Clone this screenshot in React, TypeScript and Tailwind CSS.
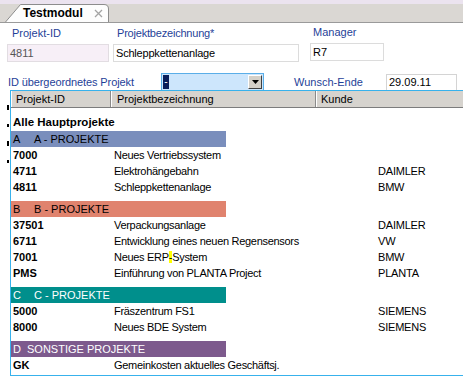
import React from 'react';

type Row = { id: string; name: React.ReactNode; kunde?: string };
type Group = { key: string; title: string; color: string; text: string; rows: Row[] };

const groups: Group[] = [
  {
    key: 'A',
    title: 'A - PROJEKTE',
    color: 'bg-[#7a8ebc]',
    text: 'text-black',
    rows: [
      { id: '7000', name: 'Neues Vertriebssystem' },
      { id: '4711', name: 'Elektrohängebahn', kunde: 'DAIMLER' },
      { id: '4811', name: 'Schleppkettenanlage', kunde: 'BMW' },
    ],
  },
  {
    key: 'B',
    title: 'B - PROJEKTE',
    color: 'bg-[#e0836e]',
    text: 'text-black',
    rows: [
      { id: '37501', name: 'Verpackungsanlage', kunde: 'DAIMLER' },
      { id: '6711', name: 'Entwicklung eines neuen Regensensors', kunde: 'VW' },
      {
        id: '7001',
        name: (
          <>
            Neues ERP<span className="bg-[#ffff00]">-</span>System
          </>
        ),
        kunde: 'BMW',
      },
      { id: 'PMS', name: 'Einführung von PLANTA Project', kunde: 'PLANTA' },
    ],
  },
  {
    key: 'C',
    title: 'C - PROJEKTE',
    color: 'bg-[#008f8c]',
    text: 'text-white',
    rows: [
      { id: '5000', name: 'Fräszentrum FS1', kunde: 'SIEMENS' },
      { id: '8000', name: 'Neues BDE System', kunde: 'SIEMENS' },
    ],
  },
  {
    key: 'D',
    title: 'SONSTIGE PROJEKTE',
    color: 'bg-[#7d5a8d]',
    text: 'text-white',
    rows: [{ id: 'GK', name: 'Gemeinkosten aktuelles Geschäftsj.' }],
  },
];

function Tab() {
  return (
    <div className="relative ml-[5px] h-[18px] w-[104px] shrink-0 self-end">
      <svg className="absolute inset-0" width="104" height="18" viewBox="0 0 104 18">
        <path d="M0.5 18 L15.5 0.5 H99 Q103.5 0.5 103.5 5 V18" fill="#fdfdfd" stroke="#8c8c8c" />
      </svg>
      <div className="relative flex h-full items-center pl-[18px]">
        <span className="text-[12px] font-bold text-black">Testmodul</span>
        <svg className="ml-[11px]" width="9" height="9" viewBox="0 0 9 9">
          <path d="M1 1 L8 8 M8 1 L1 8" stroke="#a4a4a4" strokeWidth="1.3" />
        </svg>
      </div>
    </div>
  );
}

function Label({ children, className = '' }: { children: React.ReactNode; className?: string }) {
  return <span className={`text-[11px] leading-[13px] text-[#1f3f98] ${className}`}>{children}</span>;
}

export default function App() {
  return (
    <div
      className="relative h-[388px] w-[463px] overflow-hidden bg-white text-black"
      style={{ fontFamily: '"Liberation Sans", Arial, sans-serif' }}
    >
      {/* Tab bar */}
      <div className="flex h-[23px] border-t-[4px] border-b border-t-[#ebe3ef] border-b-[#9a9a9a] bg-[#dad7d3]">
        <Tab />
      </div>

      {/* Form */}
      <div className="flex pl-[7px] pt-[4px]">
        <div className="flex w-[102px] flex-col">
          <Label className="ml-[5px] h-[13px]">Projekt-ID</Label>
          <div className="mt-[4px] flex h-[18px] items-center border border-[#e2dde2] bg-[#f7eff7] pl-[2px] text-[11px] text-[#555]">
            4811
          </div>
        </div>
        <div className="ml-[4px] flex w-[186px] flex-col">
          <Label className="ml-[4px] h-[13px] tracking-[-0.2px]">Projektbezeichnung*</Label>
          <div className="mt-[4px] flex h-[18px] items-center border border-[#dcdcdc] bg-white pl-[2px] text-[11px] tracking-[-0.2px]">
            Schleppkettenanlage
          </div>
        </div>
        <div className="ml-[11px] flex w-[74px] flex-col -mt-[1px]">
          <Label className="ml-[3px] h-[13px]">Manager</Label>
          <div className="mt-[4px] flex h-[18px] items-center border border-[#dcdcdc] bg-white pl-[2px] text-[11px]">
            R7
          </div>
        </div>
      </div>

      <div className="mt-[11px] flex items-center pl-[8px]">
        <Label className="w-[153px] tracking-[-0.1px]">ID übergeordnetes Projekt</Label>
        <div className="flex h-[18px] w-[103px] items-center border border-[#5aaee8] bg-[#cde6fc] pl-[1px]">
          <span className="flex h-[14px] w-[6px] items-center justify-center bg-[#0a1e5a] text-[10px] leading-none text-white">
            -
          </span>
          <span className="ml-auto mr-[1px] flex h-[14px] w-[14px] items-center justify-center border border-t-white border-l-white border-r-[#404040] border-b-[#404040] bg-[#d4d0c8]">
            <svg width="7" height="4" viewBox="0 0 7 4">
              <path d="M0 0 H7 L3.5 4 Z" fill="#000" />
            </svg>
          </span>
        </div>
        <Label className="ml-[30px] w-[92px]">Wunsch-Ende</Label>
        <div className="flex h-[17px] w-[71px] items-center border border-[#d4d4d4] bg-white pl-[2px] text-[11px]">
          29.09.11
        </div>
      </div>

      {/* Background remnants left of the popup */}
      <div className="mt-[14px] flex flex-col gap-[14px] pl-[7px]">
        <span className="h-[5px] w-[2px] bg-black" />
        <span className="h-[3px] w-[2px] bg-black" />
        <span className="h-[5px] w-[2px] bg-black" />
        <span className="h-[3px] w-[2px] bg-black" />
      </div>

      {/* Dropdown popup */}
      <div className="absolute left-[10px] top-[90px] h-[286px] w-[460px] border border-[#38b2ec] bg-white">
        <div className="flex h-[17px] border-b border-b-[#7c7c7c] bg-[#d6d3ce] text-[11px]">
          <div className="flex w-[100px] items-center border-l border-r border-l-white border-r-[#8a8a8a] pl-[4px]">
            Projekt-ID
          </div>
          <div className="flex w-[205px] items-center border-l border-r border-l-white border-r-[#8a8a8a] pl-[5px]">
            Projektbezeichnung
          </div>
          <div className="flex flex-1 items-center border-l border-l-white pl-[4px]">Kunde</div>
        </div>

        <div className="pt-[7px]">
          <div className="flex h-[16px] items-center pl-[2px] text-[11.5px] font-bold">Alle Hauptprojekte</div>
          {groups.map((g, gi) => (
            <div key={g.key} className={gi === 0 ? '' : 'mt-[6px]'}>
              <div className={`flex h-[16px] w-[215px] items-center pl-[2px] text-[11px] ${g.color} ${g.text}`}>
                <span className={g.key === 'D' ? 'w-[14px]' : 'w-[21px]'}>{g.key}</span>
                <span>{g.title}</span>
              </div>
              {g.rows.map((r) => (
                <div key={r.id} className="flex h-[16px] items-center text-[11px]">
                  <span className="w-[103px] pl-[2px] font-bold">{r.id}</span>
                  <span className="w-[264px] tracking-[-0.3px]">{r.name}</span>
                  <span className="tracking-[-0.2px]">{r.kunde}</span>
                </div>
              ))}
            </div>
          ))}
        </div>
      </div>
    </div>
  );
}
